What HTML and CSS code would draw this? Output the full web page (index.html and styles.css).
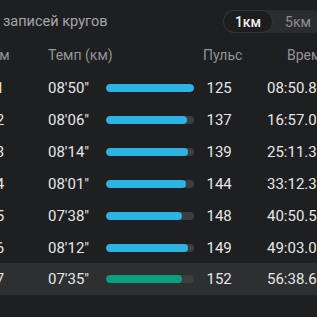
FILE: index.html
```html
<!DOCTYPE html>
<html lang="ru">
<head>
<meta charset="utf-8">
<link rel="stylesheet" href="styles.css">
</head>
<body>
<div class="page">
  <div class="topbar">
    <div class="title">записей кругов</div>
    <div class="toggle">
      <span class="seg active">1км</span>
      <span class="seg">5км</span>
    </div>
  </div>
  <div class="row head">
    <div class="c-lap">Км</div>
    <div class="c-pace">Темп (км)</div>
    <div class="c-bar"></div>
    <div class="c-hr">Пульс</div>
    <div class="c-time">Время</div>
  </div>
  <div class="row">
    <div class="c-lap">1</div><div class="c-pace">08'50"</div>
    <div class="c-bar"><div class="track"><div class="fill" style="width:100%"></div></div></div>
    <div class="c-hr">125</div><div class="c-time">08:50.8</div>
  </div>
  <div class="row">
    <div class="c-lap">2</div><div class="c-pace">08'06"</div>
    <div class="c-bar"><div class="track"><div class="fill" style="width:91.7%"></div></div></div>
    <div class="c-hr">137</div><div class="c-time">16:57.0</div>
  </div>
  <div class="row">
    <div class="c-lap">3</div><div class="c-pace">08'14"</div>
    <div class="c-bar"><div class="track"><div class="fill" style="width:93.2%"></div></div></div>
    <div class="c-hr">139</div><div class="c-time">25:11.3</div>
  </div>
  <div class="row">
    <div class="c-lap">4</div><div class="c-pace">08'01"</div>
    <div class="c-bar"><div class="track"><div class="fill" style="width:90.8%"></div></div></div>
    <div class="c-hr">144</div><div class="c-time">33:12.3</div>
  </div>
  <div class="row">
    <div class="c-lap">5</div><div class="c-pace">07'38"</div>
    <div class="c-bar"><div class="track"><div class="fill" style="width:86.4%"></div></div></div>
    <div class="c-hr">148</div><div class="c-time">40:50.5</div>
  </div>
  <div class="row">
    <div class="c-lap">6</div><div class="c-pace">08'12"</div>
    <div class="c-bar"><div class="track"><div class="fill" style="width:92.8%"></div></div></div>
    <div class="c-hr">149</div><div class="c-time">49:03.0</div>
  </div>
  <div class="row best">
    <div class="c-lap">7</div><div class="c-pace">07'35"</div>
    <div class="c-bar"><div class="track"><div class="fill green" style="width:85.8%"></div></div></div>
    <div class="c-hr">152</div><div class="c-time">56:38.6</div>
  </div>
</div>
</body>
</html>
```

FILE: styles.css
```css
html, body {
  margin: 0;
  padding: 0;
  background: #1e1f21;
  overflow: hidden;
}
body {
  width: 317px;
  height: 317px;
  font-family: Roboto, "Liberation Sans", sans-serif;
  color: #e6e6e6;
  white-space: nowrap;
}
.page {
  width: 360px;
  margin-left: -20px;
}
.topbar {
  display: flex;
  align-items: center;
  height: 43px;
  padding-left: 23px;
}
.title {
  font-size: 14.5px;
  color: #a6a6a8;
}
.toggle {
  margin-left: auto;
  margin-right: 17px;
  display: flex;
  background: #2b2c2e;
  border-radius: 12px;
  height: 23px;
}
.seg {
  width: 50px;
  display: flex;
  align-items: center;
  justify-content: center;
  font-size: 14px;
  color: #8e8e90;
  border-radius: 12px;
}
.seg.active {
  background: #1c1d1f;
  color: #f0f0f0;
  font-weight: 500;
  box-shadow: inset 0 0 0 1px #333436;
}
.row {
  display: grid;
  grid-template-columns: 68px 58px 88px 73px 1fr;
  align-items: center;
  height: 31.83px;
  font-size: 15px;
  padding-top: 1px;
  box-sizing: border-box;
}
.row.head {
  height: 29px;
  padding-top: 0;
  padding-bottom: 6px;
  font-size: 14px;
  color: #949496;
}
.row.best {
  background: #2e2f31;
}
.c-lap {
  padding-right: 28px;
  text-align: center;
}
.c-hr {
  padding-left: 12.5px;
}
.head .c-hr {
  padding-left: 9px;
}
.head .c-time {
  padding-left: 20px;
}
.track {
  height: 8px;
  border-radius: 4px;
  background: #3c3d3f;
  overflow: hidden;
}
.fill {
  height: 100%;
  border-radius: 4px;
  background: #2fb3e5;
}
.fill.green {
  background: #0c9f7d;
}
```
